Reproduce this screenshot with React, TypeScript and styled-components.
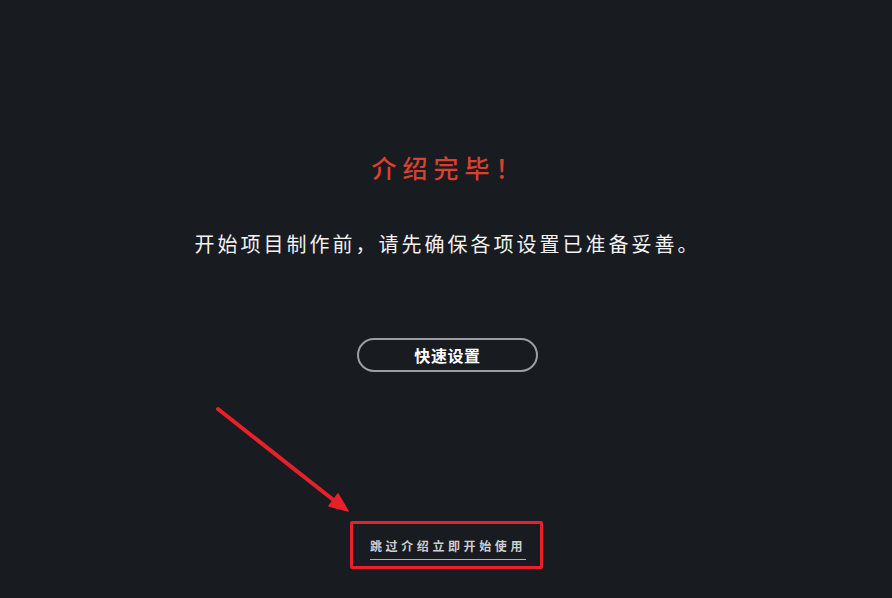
import React from 'react';
import styled, { createGlobalStyle } from 'styled-components';

const GlobalStyle = createGlobalStyle`
  html, body {
    margin: 0;
    padding: 0;
    background: #181b1f;
  }
  body {
    font-family: "Noto Sans CJK SC", "Noto Sans", sans-serif;
  }
`;

// Style
const Page = styled.main`
  position: relative;
  width: 892px;
  height: 598px;
  background: #181b1f;
  display: flex;
  flex-direction: column;
  align-items: center;
  padding-top: 151px;
  box-sizing: border-box;
  overflow: hidden;
`;

const Title = styled.h1`
  margin: 0 0 0 6px;
  font-size: 25px;
  line-height: 33px;
  font-weight: 500;
  letter-spacing: 6px;
  color: #d9412f;
`;

const Lead = styled.p`
  margin: 46px 0 0 3px;
  font-size: 20px;
  line-height: 28px;
  letter-spacing: 3px;
  color: #f2f2f2;
`;

const QuickButton = styled.button`
  margin: 80px 0 0 3px;
  width: 181px;
  height: 34px;
  border: 2px solid #9b9ea2;
  border-radius: 17px;
  background: transparent;
  color: #ffffff;
  font-family: inherit;
  font-size: 16px;
  font-weight: 700;
  letter-spacing: 0.6px;
  cursor: pointer;
`;

const Highlight = styled.div`
  margin-top: 149px;
  width: 193px;
  height: 48px;
  box-sizing: border-box;
  border: 3px solid #e8202a;
  border-radius: 2px;
  display: flex;
  justify-content: center;
  align-items: flex-start;
  padding-top: 12px;
`;

const SkipLink = styled.a`
  display: inline-block;
  font-size: 12px;
  line-height: 20px;
  font-weight: 700;
  letter-spacing: 3.6px;
  color: #cfcfcf;
  text-decoration: none;
  border-bottom: 1px solid #b5b5b5;
  padding-bottom: 3px;
  margin-left: 4px;
  cursor: pointer;
`;

const Annotation = styled.svg`
  position: absolute;
  left: 0;
  top: 0;
  pointer-events: none;
`;

// Component
function App() {
  return (
    <>
      <GlobalStyle />
      <Page>
        <Title>介绍完毕！</Title>
        <Lead>开始项目制作前，请先确保各项设置已准备妥善。</Lead>
        <QuickButton>快速设置</QuickButton>
        <Highlight>
          <SkipLink>跳过介绍立即开始使用</SkipLink>
        </Highlight>
        <Annotation width="892" height="598">
          <line x1="218" y1="409" x2="336" y2="502" stroke="#e8202a" strokeWidth="4" strokeLinecap="round" />
          <polygon points="348,511 329,506 338,494" fill="#e8202a" stroke="#e8202a" strokeWidth="1.5" strokeLinejoin="round" />
        </Annotation>
      </Page>
    </>
  );
}

export default App;
